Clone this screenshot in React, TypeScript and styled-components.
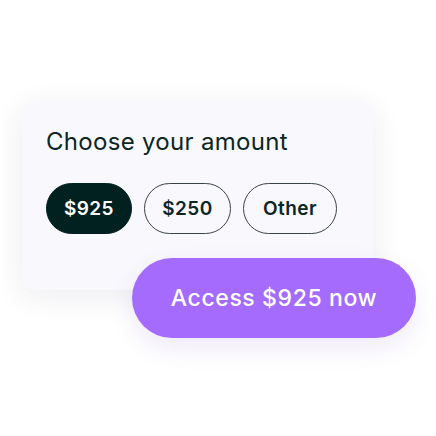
import React, { useState } from "react";
import styled, { createGlobalStyle } from "styled-components";

const Global = createGlobalStyle`
  html, body { margin: 0; padding: 0; background: #ffffff; }
  body { font-family: Inter, "Noto Sans", sans-serif; }
`;

const Stage = styled.div`
  width: 436px;
  height: 436px;
  box-sizing: border-box;
  padding: 102px 0 0 22px;
  display: flex;
  flex-direction: column;
`;

const Card = styled.div`
  width: 351px;
  height: 188px;
  box-sizing: border-box;
  background: #f9f8fd;
  border-radius: 12px;
  box-shadow: 0 6px 30px rgba(40, 30, 80, 0.09);
  padding: 25px 0 0 24px;
  display: flex;
  flex-direction: column;
`;

const Title = styled.h2`
  margin: 0;
  font-size: 24px;
  font-weight: 400;
  color: #0b2626;
  letter-spacing: 0.3px;
  line-height: 30px;
`;

const Options = styled.div`
  display: flex;
  gap: 12px;
  margin-top: 26px;
`;

const Pill = styled.button<{ $active?: boolean; $w: number }>`
  width: ${(p) => p.$w}px;
  height: 51px;
  box-sizing: border-box;
  border-radius: 26px;
  border: 1px solid ${(p) => (p.$active ? "#012121" : "#3a4444")};
  background: ${(p) => (p.$active ? "#012121" : "transparent")};
  color: ${(p) => (p.$active ? "#ffffff" : "#0b2626")};
  font-family: Inter, "Noto Sans", sans-serif;
  font-size: 19px;
  font-weight: 600;
  letter-spacing: 0.4px;
  display: flex;
  align-items: center;
  justify-content: center;
  padding: 0;
  cursor: pointer;
`;

const Cta = styled.button`
  align-self: flex-start;
  margin: -32px 0 0 110px;
  width: 284px;
  height: 80px;
  border: none;
  border-radius: 40px;
  background: #a46bfd;
  color: #ffffff;
  font-family: Inter, "Noto Sans", sans-serif;
  font-size: 23px;
  font-weight: 500;
  letter-spacing: 0.6px;
  box-shadow: 0 10px 24px rgba(120, 80, 200, 0.12);
  cursor: pointer;
  position: relative;
`;

const amounts = [
  { label: "$925", w: 86 },
  { label: "$250", w: 87 },
  { label: "Other", w: 94 },
];

export default function App() {
  const [sel, setSel] = useState(0);
  const chosen = amounts[sel].label === "Other" ? "$925" : amounts[sel].label;
  return (
    <>
      <Global />
      <Stage>
        <Card>
          <Title>Choose your amount</Title>
          <Options>
            {amounts.map((a, i) => (
              <Pill key={a.label} $w={a.w} $active={i === sel} onClick={() => setSel(i)}>
                {a.label}
              </Pill>
            ))}
          </Options>
        </Card>
        <Cta>Access {chosen} now</Cta>
      </Stage>
    </>
  );
}
